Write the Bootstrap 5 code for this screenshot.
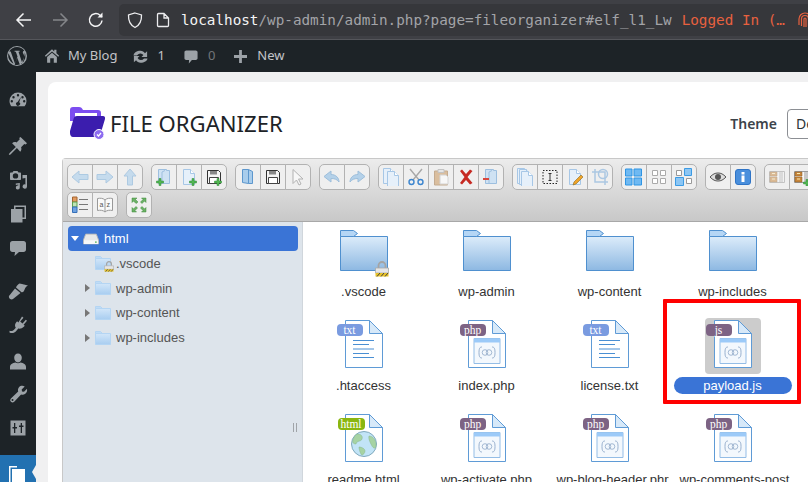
<!DOCTYPE html>
<html lang="en">

<head>
    <meta charset="UTF-8">
    <meta name="viewport" content="width=device-width, initial-scale=1.0">
    <title>File Organizer</title>
    <link href="https://cdn.jsdelivr.net/npm/bootstrap@5.3.0/dist/css/bootstrap.min.css" rel="stylesheet">
    <style>
        html, body { height: 100%; overflow: hidden; background: #f0f0f1; }
        body { font-family: "Noto Sans", sans-serif; width: 808px; height: 482px; }

        /* browser chrome */
        .ff-bar { height: 40px; background: #3f4045; border-bottom: 1px solid #55565b; padding-left: 15px; }
        .ff-nav { width: 36px; }
        .ff-url { margin-left: 14px; flex: 1; min-width: 0; height: 32px; background: #36373b; border-radius: 5px 0 0 5px; padding-left: 8px; font: 14.3px "DejaVu Sans Mono", monospace; color: #a3a4a8; white-space: nowrap; overflow: hidden; }
        .ff-url b { font-weight: 400; color: #f4f4f5; }
        .ff-shield { margin-right: 13px; }
        .ff-page { margin-right: 11px; }
        .ff-logged { color: #e8613f; margin-left: 10px; }
        .ff-print { margin-left: 12px; }

        /* wp admin */
        .wp-bar { height: 32px; background: #1d2327; color: #c3c4c7; font-size: 13px; padding-left: 7px; }
        .wp-bar svg { fill: #9ca2a7; display: block; flex: none; }
        .bar-home { margin: 0 8px 0 1px; }
        .bar-sync { margin: 0 8px 0 15px; }
        .bar-comment { margin: 0 10px 0 19px; }
        .bar-new { margin: 0 10px 0 19px; }
        .wp-side { width: 36px; background: #1d2327; padding-top: 11px; }
        .side-row { height: 34px; }
        .side-row svg { width: 20px; height: 20px; fill: #9ca2a7; display: block; margin-left: -1px; }
        .side-gap { margin-top: 12px; }
        .side-gap-sm { margin-top: 9px; }
        .side-gap-xs { margin-top: 3px; }
        .side-up { margin-top: -2px; }
        .side-active { height: 30px; margin-top: 10px; background: #2271b1; position: relative; padding: 11px 0 0 9px; }
        .side-active::after { content: ""; position: absolute; right: 0; top: 10px; border: 7px solid transparent; border-right-color: #f0f0f1; border-left: 0; border-right-width: 4px; }
        .wp-main { background: #f0f0f1; padding: 10px 0 0 12px; min-width: 0; overflow: hidden; }
        .fo-card { background: #fff; border-radius: 8px 0 0 0; height: 420px; overflow: hidden; padding: 25px 0 0 14px; width: 859px; }
        .fo-logo { margin-left: 8px; }
        .fo-title { font-size: 22.1px; color: #1d2327; font-weight: 400; margin: -2px 0 0 4px; line-height: 32px; }
        .fo-theme { font-size: 14px; font-weight: 600; color: #3c434a; margin-right: 10px; }
        .fo-select { width: 120px; height: 30px; min-height: 30px; font-size: 14px; padding: 0 24px 0 8px; border-color: #8c8f94; border-radius: 4px; color: #2c3338; flex: none; }

        /* elfinder */
        .elf-wrap { margin-top: 18px; border: 1px solid #c8c8c8; border-right: 0; border-radius: 4px 0 0 0; }
        .elf-tools { height: 63px; padding: 5px 0 0 4px; background: linear-gradient(#ececec, #c8c8c8); border-bottom: 1px solid #a8a8a8; }
        .elf-line { gap: 8px; height: 28px; flex-wrap: nowrap; }
        .elf-btn { width: 26px; height: 26px; padding: 0; background: #efefef; border: 1px solid #b2b2b2; border-radius: 5px; display: flex; align-items: center; justify-content: center; flex: none; }
        .elf-btn svg { width: 18px; height: 18px; display: block; flex: none; }
        .elf-btn.off svg { opacity: .5; }
        .elf-tree { width: 240px; height: 262px; background: #dde4eb; padding: 4px 4px 0 5px; font: 13px "Liberation Sans", sans-serif; color: #555; flex: none; position: relative; border-right: 1px solid #d0d6dc; }
        .tree-row { height: 24.75px; padding-left: 27px; }
        .tree-row svg { flex: none; }
        .tree-row.on { height: 25px; background: #3a74d6; color: #fff; border-radius: 4px; padding-left: 3px; }
        .tree-tri { width: 0; height: 0; border-style: solid; border-width: 4px 0 4px 5px; border-color: transparent transparent transparent #777; margin: 0 5px 0 -10px; flex: none; }
        .tree-tri.open { border-width: 5px 4px 0; border-color: #fff transparent transparent; margin: 0 4px 0 0; }
        .tree-ico { margin-right: 5px; flex: none; position: relative; display: flex; }
        .tree-grip { position: absolute; right: 5px; top: 201px; width: 4px; height: 9px; border: solid #a0a4a8; border-width: 0 1px; }
        .tree-lock { position: absolute; left: 9px; top: 5px; }
        .elf-files { display: grid; grid-template-columns: repeat(4, 123px); grid-auto-rows: 94.5px; margin-left: -1px; padding-top: 1px; font: 13px "Liberation Sans", sans-serif; color: #333; position: relative; }
        .file-cell { display: flex; flex-direction: column; align-items: center; }
        .file-box { width: 56px; height: 56px; border-radius: 4px; position: relative; display: flex; align-items: center; justify-content: center; }
        .file-box.doc { align-items: flex-start; padding-top: 2px; }
        .file-cell.sel .file-box { background: #ccc; }
        .file-name { margin-top: 3px; height: 17px; line-height: 17px; padding: 0 6px; border-radius: 9px; width: 118px; text-align: center; white-space: nowrap; overflow: hidden; }
        .file-box:not(.doc) + .file-name { margin-top: 4px; }
        .file-cell.sel .file-name { background: #3a74d6; color: #fff; }
        .file-tag { position: absolute; left: 1px; top: 6px; height: 12px; width: 26px; border-radius: 4px; color: #fff; font: 11.5px/12px "Liberation Serif", serif; text-align: center; }
        .tag-txt { background: #7a9be0; }
        .tag-php { background: #7d6384; }
        .tag-html { background: #8ab60f; left: 2px; width: 27px; }
        .big-lock { position: absolute; left: 39px; top: 38px; }
        .red-box { position: absolute; left: 361px; top: 77px; width: 138px; height: 105px; border: 4px solid #f00; border-radius: 1px; pointer-events: none; }
    </style>
</head>

<body>
    <svg width="0" height="0" class="position-absolute">
        <defs>
            <linearGradient id="fold" x1="0" y1="0" x2="0" y2="1"><stop offset="0" stop-color="#dcecfa"/><stop offset="1" stop-color="#8db8e2"/></linearGradient>
            <linearGradient id="fold2" x1="0" y1="0" x2="0" y2="1"><stop offset="0" stop-color="#d2e6f9"/><stop offset="1" stop-color="#a8cdf0"/></linearGradient>
            <symbol id="big-folder" viewBox="0 0 48 42">
                <path d="M.5 6.500h47v34H.5z" fill="url(#fold)" stroke="#4f90cf"/>
                <path d="M.5.500h13l4 3-4 3H.5z" fill="#b5d6f5" stroke="#4f90cf"/>
            </symbol>
            <symbol id="big-text" viewBox="0 0 38 48">
                <path d="M.5.500h24l13 13v34H.5z" fill="#fff" stroke="#5f9bd6"/>
                <path d="M24.500.500l13 13h-13z" fill="#d7e9f9" stroke="#5f9bd6"/>
                <path d="M8 20.500h21M8 24.500h16M8 29h21M8 33.500h16M8 37.500h21" stroke="#4a8fd3" fill="none"/>
            </symbol>
            <symbol id="big-code" viewBox="0 0 38 48">
                <path d="M.5.500h24l13 13v34H.5z" fill="#fff" stroke="#5f9bd6"/>
                <path d="M24.500.500l13 13h-13z" fill="#d7e9f9" stroke="#5f9bd6"/>
                <path d="M6 18.500h26v25H6z" fill="#f3f8fd" stroke="#94bde6"/>
                <path d="M6 18.500h26v4H6z" fill="#9ccaf8"/>
                <path d="M14 27c-2 0-3 1-3 5.500s1 5.500 3 5.500M24 27c2 0 3 1 3 5.500s-1 5.500-3 5.500" fill="none" stroke="#8fa8c8" stroke-width=".9"/>
                <circle cx="17" cy="32.500" r="2.800" fill="none" stroke="#8fa8c8" stroke-width=".8"/>
                <circle cx="21" cy="32.500" r="2.800" fill="none" stroke="#8fa8c8" stroke-width=".8"/>
            </symbol>
            <symbol id="big-web" viewBox="0 0 38 48">
                <path d="M.5.500h24l13 13v34H.5z" fill="#fff" stroke="#5f9bd6"/>
                <path d="M24.500.500l13 13h-13z" fill="#d7e9f9" stroke="#5f9bd6"/>
                <circle cx="19" cy="30" r="12.500" fill="#c2e4f7" stroke="#7fa9bd"/>
                <path d="M12 20c4 0 6 2 5 5s-5 1-6 5c-2 0-4-1-3-4s2-5 4-6zM24 22c4 0 7 4 7 9s-3 3-4 1-4-7-3-10zM14 33c3 0 6 2 6 4s-2 4-3 4-3-5-3-8z" fill="#a6d3a3" stroke="#86b58a" stroke-width=".5"/>
            </symbol>
            <symbol id="lock" viewBox="0 0 14 16">
                <path d="M3.500 7V4.500a3.500 3.500 0 0 1 7 0V7" fill="none" stroke="#a4a4a4" stroke-width="1.800"/>
                <path d="M.5 7h13v5H.5z" fill="#e6e6e6" stroke="#a8a8a8" stroke-width=".8"/>
                <path d="M.5 12h13v3.500H.5z" fill="#e8c227"/>
                <path d="M2 15.500l3-3.500M6 15.500l3-3.500M10 15.500l3-3.500" stroke="#444" stroke-width="1"/>
            </symbol>
            <symbol id="mini-folder" viewBox="0 0 16 14">
                <path d="M.5 2.500h15v11H.5z" fill="url(#fold2)" stroke="#b4d5f3"/>
                <path d="M.5.500h5l2 2h-7z" fill="#c0dcf6" stroke="#b4d5f3"/>
            </symbol>
            <symbol id="t-folder" viewBox="0 0 18 18">
                <path d="M3.500 1.500h8v1h3v13h-11z" fill="#cfe2f3" stroke="#9dbfdf"/>
                <path d="M10 2.500l-3 1.500v12" fill="none" stroke="#9dbfdf"/>
            </symbol>
            <symbol id="t-folder-open" viewBox="0 0 18 18">
                <path d="M3.500 1.500h6l4 2v12h-4l-6-1z" fill="#a9cdec" stroke="#5d97cd"/>
                <path d="M9.500 1.500v14" stroke="#5d97cd"/>
            </symbol>
            <symbol id="t-plus" viewBox="0 0 18 18">
                <path d="M5.500 10h2.500V7.500h2V10h2.500v2H10v2.500H8V12H5.500z" fill="#53b653" stroke="#2d8a36" stroke-width=".5"/>
            </symbol>
            <symbol id="t-file" viewBox="0 0 18 18">
                <path d="M3.500 1.500h7l4 4v11h-11z" fill="#e6f0fa" stroke="#a7c7e6"/>
                <path d="M10.500 1.500v4h4" fill="#fff" stroke="#a7c7e6"/>
            </symbol>
            <symbol id="t-floppy" viewBox="0 0 18 18">
                <path d="M2.500 2.500h11l2 2v11h-13z" fill="#f4f4f4" stroke="#333"/>
                <path d="M5 3h7v3.500H5z" fill="#888"/>
                <path d="M4.500 9.500h9v6h-9z" fill="#fff" stroke="#444"/>
            </symbol>
            <symbol id="t-grid-big" viewBox="0 0 18 18">
                <path d="M.5 1h6.500v7H.5zM9 1h7.500v7H9zM.5 10h6.500v7H.5zM9 10h7.500v7H9z" fill="#6fb9f2" stroke="#2f95e4"/>
            </symbol>
            <symbol id="t-grid-small" viewBox="0 0 18 18">
                <path d="M2.500 2.500h5v5h-5zM10.500 2.500h5v5h-5zM2.500 10.500h5v5h-5zM10.500 10.500h5v5h-5z" fill="#fff" stroke="#aaa"/>
            </symbol>
            <symbol id="t-grid-mix" viewBox="0 0 18 18">
                <path d="M1.500 2.500h5v5h-5zM11.500 10.500h5v5h-5z" fill="#fff" stroke="#999"/>
                <path d="M9.500.500h7v7h-7zM.500 9.500h8v8h-8z" fill="#8cc6f4" stroke="#3c9be4"/>
            </symbol>
            <symbol id="t-arch" viewBox="0 0 18 18">
                <path d="M1.500 3.500h15v11h-15z" fill="#f5f5f5" stroke="#999"/>
                <path d="M2 4h7v4H2zM2 9h7v5H2z" fill="#c8873c" stroke="#8a5a20" stroke-width=".5"/>
                <path d="M11 5h4M11 7h4M11 9h4M11 11h4M11 13h4" stroke="#9a9a9a"/>
                <path d="M4 5.500h3M4 11h3" stroke="#fbe9b0"/>
            </symbol>
            <symbol id="i-dash" viewBox="0 0 20 20"><path fill-rule="evenodd" d="M10 2.500a8.500 8.500 0 0 0-8.500 8.500c0 2 .7 3.900 1.900 5.300h13.200a8.300 8.300 0 0 0 1.900-5.300A8.500 8.500 0 0 0 10 2.500zM10 4a1.200 1.200 0 1 1 0 2.400A1.200 1.200 0 0 1 10 4zM5.500 6a1.200 1.200 0 1 1 0 2.400 1.200 1.200 0 0 1 0-2.400zM3.800 10a1.200 1.200 0 1 1 0 2.400 1.200 1.200 0 0 1 0-2.400zM13 7l-1.800 5.200a2 2 0 1 1-1.600-.3L13 7zM14.500 6a1.200 1.200 0 1 1 0 2.400 1.200 1.200 0 0 1 0-2.400zM16.200 10a1.200 1.200 0 1 1 0 2.400 1.200 1.200 0 0 1 0-2.400z"/></symbol>
            <symbol id="i-pin" viewBox="0 0 20 20"><path d="M12.500 1l6.500 6.300-1.400 1.300-1.300-.6-3.200 3.300c.6 1.600.4 3.200-.9 4.400L8.900 12 2.500 18.500.8 19l.6-1.700L7.800 11 4.100 7.300c1.200-1.300 2.800-1.500 4.400-.9l3.300-3.200-.6-1.300z"/></symbol>
            <symbol id="i-media" viewBox="0 0 20 20"><path fill-rule="evenodd" d="M3 2.500h1.500L5.500 1h4l1 1.500H12c.6 0 1 .4 1 1v5.500c0 .6-.4 1-1 1H3c-.6 0-1-.4-1-1V3.500c0-.6.4-1 1-1zM7.500 3.200a2.700 2.700 0 1 0 0 5.400 2.700 2.700 0 0 0 0-5.400z"/><path d="M14.500 5h4.500v11.500a2.200 2.200 0 1 1-1.600-2.100V8l-2.900.4zM7.800 13.500l4-.6v4.600a2 2 0 1 1-1.500-1.900v-1l-2.500.3z"/></symbol>
            <symbol id="i-pages" viewBox="0 0 20 20"><path fill-rule="evenodd" d="M6 1.500h12v13.500h-3.500v3.500H3V5h3zM7.500 3v2h7v8.500H16.500V3z"/></symbol>
            <symbol id="i-comment" viewBox="0 0 20 20"><path d="M4.500 3h11C17 3 18 4 18 5.500v6c0 1.500-1 2.500-2.500 2.500H11l-4.500 4 .5-4H4.500C3 14 2 13 2 11.500v-6C2 4 3 3 4.500 3z"/></symbol>
            <symbol id="i-brush" viewBox="0 0 20 20"><path d="M11.500 2.500L14 3l6 1.500c-2 1-2.800 2.300-3.300 3.700-.6 1.500-1 3.300-3.200 3L8 6.500c.5-2 2-3 3.500-4zM7 7.500l5.500 4.500-7.500 6c-1.200 1-3.500.2-4-1.500-.3-1 0-1.800 1-2.700z"/></symbol>
            <symbol id="i-plug" viewBox="0 0 20 20"><path d="M14 1.500l1.500 1.200-3.300 3.800 2.300 2 3.300-3.800L19 5.800l-3.400 3.900 1.200 1.100-1 1c-1.500 1.500-3.500 2.200-5.500 1.800l-2.300 2.600C6.500 18 4 18.500 1.500 17.500v-1.800c1.800.5 3.400.3 4.500-1l1.800-2c-1.200-1.700-1-3.800.3-5.300l1-1.100 1.300 1.100z"/></symbol>
            <symbol id="i-user" viewBox="0 0 20 20"><path d="M10 1.500c2.300 0 3.800 1.800 3.800 4.300S12.300 10.500 10 10.500 6.200 8.300 6.200 5.800 7.700 1.500 10 1.500zM7.500 10.500c1.500 1 3.500 1 5 0 3 .3 5.500 2 5.500 4.500v2.500H2V15c0-2.500 2.500-4.200 5.500-4.500z"/></symbol>
            <symbol id="i-wrench" viewBox="0 0 20 20"><path fill-rule="evenodd" d="M16.700 2.500l-3 3 .3 2 2 .3 3-3c.4 2-.2 4-1.700 5-1.300 1-2.800 1.200-4.200.7L6.200 17.700a2.300 2.300 0 1 1-3.300-3.300l7.300-7c-.5-1.500-.2-3 .8-4.200 1.300-1.400 3.700-1.900 5.700-.7zM4.500 15a1 1 0 1 0 0 2 1 1 0 0 0 0-2z"/></symbol>
            <symbol id="i-sliders" viewBox="0 0 20 20"><path fill-rule="evenodd" d="M2.500 2.500h15v15h-15zM6 5v4H4.500v1.500H6V15h1.300v-4.500H9V9H7.300V5zM12.700 5v2.500H11V9h1.700v6H14V9h1.500V7.500H14V5z"/></symbol>
        </defs>
    </svg>

    <div class="ff-bar d-flex align-items-center">
        <div class="ff-nav">
            <svg width="18" height="18" viewBox="0 0 18 18" fill="none" stroke="#f4f4f5" stroke-width="1.500" class="d-block"><path d="M16 9H2M8.500 2.500L2 9l6.500 6.500"/></svg>
        </div>
        <div class="ff-nav">
            <svg width="18" height="18" viewBox="0 0 18 18" fill="none" stroke="#85868a" stroke-width="1.500" class="d-block"><path d="M2 9h14M9.500 2.500L16 9l-6.500 6.500"/></svg>
        </div>
        <div>
            <svg width="18" height="18" viewBox="0 0 18 18" fill="none" stroke="#f4f4f5" stroke-width="1.500" class="d-block"><path d="M15 9.500a6.300 6.300 0 1 1-2-5.200L15 6"/><path d="M15.500 1.500v5h-5z" fill="#f4f4f5" stroke="none"/></svg>
        </div>
        <div class="ff-url d-flex align-items-center">
            <svg width="16" height="18" viewBox="0 0 16 18" fill="none" stroke="#ececee" stroke-width="1.300" class="flex-shrink-0 ff-shield"><path d="M8 2l6.500 2c.3 6-1.500 10-6.500 12.500C3 14 1.200 10 1.500 4z"/></svg>
            <svg width="14" height="16" viewBox="0 0 14 16" fill="none" stroke="#ececee" stroke-width="1.300" class="flex-shrink-0 ff-page"><path d="M1.500 2.500c0-.6.4-1 1-1h5.500l4.500 4.500v7.500c0 .6-.4 1-1 1h-9c-.6 0-1-.4-1-1zM8 1.500V6h4.500"/></svg>
            <span class="flex-shrink-0"><b>localhost</b>/wp-admin/admin.php?page=fileorganizer#elf_l1_Lw</span>
            <span class="ff-logged flex-shrink-0">Logged In (…</span>
            <svg width="16" height="18" viewBox="0 0 16 18" fill="none" stroke="#e8613f" stroke-width="1.200" class="ff-print flex-shrink-0"><path d="M2 14V8a6 6 0 0 1 12 0v6M4.500 15V8a3.500 3.500 0 0 1 7 0v7M7 16V8a1 1 0 0 1 2 0v8"/></svg>
        </div>
    </div>

    <div class="wp-bar d-flex align-items-center">
        <svg width="20" height="20" viewBox="0 0 20 20" class="me-3"><path fill-rule="evenodd" d="M10 0a10 10 0 1 1 0 20 10 10 0 0 1 0-20zM10 1a9 9 0 0 0-7.800 4.500h1.500L8 17.800l2.500-7.300-1.700-4.700-1.200-.1v-.9c2-.1 3.500-.1 5 0v.9l-1.100.1 3.800 11.500 1.300-4c1-3 .4-4.300-.4-5.700-.7-1.200-.4-2.700 1.100-2.900A9 9 0 0 0 10 1zM1.500 7.200a9 9 0 0 0 5 10.500zM10.200 11.800L7.700 18.700a9 9 0 0 0 5.100-.1zM17.600 6.300c.5 2.500-.5 4.500-1 6.200l-2.600 5.400a9 9 0 0 0 3.600-11.600z"/></svg>
        <svg width="16" height="16" viewBox="0 0 18 18" class="bar-home"><path d="M9 1.500l2.500 2.300V2h2.500v4l3 2.800-1 1L9 3.800 2 9.800l-1-1zM3.500 10L9 5.300l5.500 4.700v6.500h-3.500v-5H7v5H3.500z"/></svg>
        <span>My Blog</span>
        <svg width="17" height="17" viewBox="0 0 18 18" class="bar-sync"><path d="M9 3c2 0 3.700 1 4.700 2.500L16 3.500v6h-6l2.100-2.200A4 4 0 0 0 5.300 8H1.600C2 5.200 5 3 9 3zM2 8.500h6l-2.100 2.200a4 4 0 0 0 6.800.3h3.700C16 13.800 13 15.500 9 15.500c-2 0-3.700-1-4.700-2.500L2 15z"/></svg>
        <span>1</span>
        <svg width="14" height="17" viewBox="0 0 16 18" class="bar-comment"><path d="M2.500 2h11c1 0 2 1 2 2v7c0 1-1 2-2 2H9l-3.500 4 .3-4H2.500c-1 0-2-1-2-2V4c0-1 1-2 2-2z"/></svg>
        <span class="opacity-50">0</span>
        <svg width="13" height="13" viewBox="0 0 14 14" class="bar-new"><path d="M5.500 0h3v5.500H14v3H8.500V14h-3V8.500H0v-3h5.500z"/></svg>
        <span>New</span>
    </div>

    <div class="d-flex">
        <div class="wp-side flex-shrink-0">
            <div class="side-row d-flex align-items-center justify-content-center"><svg><use href="#i-dash"/></svg></div>
            <div class="side-row side-gap d-flex align-items-center justify-content-center"><svg><use href="#i-pin"/></svg></div>
            <div class="side-row d-flex align-items-center justify-content-center"><svg><use href="#i-media"/></svg></div>
            <div class="side-row d-flex align-items-center justify-content-center"><svg><use href="#i-pages"/></svg></div>
            <div class="side-row d-flex align-items-center justify-content-center"><svg><use href="#i-comment"/></svg></div>
            <div class="side-row side-gap-sm d-flex align-items-center justify-content-center"><svg><use href="#i-brush"/></svg></div>
            <div class="side-row d-flex align-items-center justify-content-center"><svg><use href="#i-plug"/></svg></div>
            <div class="side-row side-gap-xs d-flex align-items-center justify-content-center"><svg><use href="#i-user"/></svg></div>
            <div class="side-row side-up d-flex align-items-center justify-content-center"><svg><use href="#i-wrench"/></svg></div>
            <div class="side-row d-flex align-items-center justify-content-center"><svg><use href="#i-sliders"/></svg></div>
            <div class="side-active">
                <svg width="16" height="16" viewBox="0 0 16 16" class="d-block"><path d="M0 0h8v1.500H1.500V16H0z" fill="#fff"/><path d="M3 3h13v13H3z" fill="#fff"/></svg>
            </div>
        </div>

        <div class="wp-main flex-grow-1">
            <div class="fo-card">
                <div class="d-flex align-items-center">
                    <svg width="36" height="33" viewBox="0 0 36 33" class="flex-shrink-0 fo-logo">
                        <path d="M0 3c0-2 1-3 3-3h6c2 0 3 1 4 3h15c2 0 3 1 3 3v8H0z" fill="#7c4df0"/>
                        <path d="M5 6h22v5H5z" fill="#fff"/>
                        <path d="M0 26c0 2 1 4 3 4h24c2 0 3-1 3.500-3L35 12c.4-2-.5-3-2-3H7c-2 0-3 1-3.500 3L0 24z" fill="#3b1dae"/>
                        <circle cx="29" cy="27.500" r="5" fill="#8d6cf0" stroke="#fff"/>
                        <path d="M27 27.500l1.500 1.500L31 26" fill="none" stroke="#fff" stroke-width="1.200"/>
                    </svg>
                    <h1 class="fo-title flex-shrink-0">FILE ORGANIZER</h1>
                    <div class="ms-auto d-flex align-items-center">
                        <label class="fo-theme">Theme</label>
                        <select class="form-select fo-select"><option>Default</option></select>
                    </div>
                </div>

                <div class="elf-wrap">
                    <div class="elf-tools">
                        <div class="elf-line d-flex">
                            <div class="btn-group">
                                <button class="btn elf-btn off"><svg viewBox="0 0 18 18"><path d="M1 9l7-6v3.500h9v5H8V15z" fill="#9cc8ec" stroke="#6ea6d6"/></svg></button>
                                <button class="btn elf-btn off"><svg viewBox="0 0 18 18"><path d="M17 9l-7-6v3.500H1v5h9V15z" fill="#9cc8ec" stroke="#6ea6d6"/></svg></button>
                                <button class="btn elf-btn off"><svg viewBox="0 0 18 18"><path d="M9 1l6 7h-3.500v9h-5V8H3z" fill="#9cc8ec" stroke="#6ea6d6"/></svg></button>
                            </div>
                            <div class="btn-group">
                                <button class="btn elf-btn"><svg viewBox="0 0 18 18"><use href="#t-folder"/><use href="#t-plus" x="-4" y="3"/></svg></button>
                                <button class="btn elf-btn"><svg viewBox="0 0 18 18"><use href="#t-file"/><use href="#t-plus" x="4" y="3"/></svg></button>
                                <button class="btn elf-btn"><svg viewBox="0 0 18 18"><use href="#t-floppy"/><use href="#t-plus" x="4" y="3"/></svg></button>
                            </div>
                            <div class="btn-group">
                                <button class="btn elf-btn"><svg viewBox="0 0 18 18"><use href="#t-folder-open"/></svg></button>
                                <button class="btn elf-btn"><svg viewBox="0 0 18 18"><use href="#t-floppy"/></svg></button>
                                <button class="btn elf-btn off"><svg viewBox="0 0 18 18"><path d="M4 1.500v14l3.500-3.500 2.500 5 2-1-2.500-5H14z" fill="#fff" stroke="#777"/></svg></button>
                            </div>
                            <div class="btn-group">
                                <button class="btn elf-btn off"><svg viewBox="0 0 18 18"><path d="M8 3L1 8.500 8 14v-3.500c3 0 6 .5 8 3.500 0-4-3-7.500-8-7.500z" fill="#7ab4e4" stroke="#4f8fc8"/></svg></button>
                                <button class="btn elf-btn off"><svg viewBox="0 0 18 18"><path d="M10 3l7 5.500-7 5.500v-3.500c-3 0-6 .5-8 3.500 0-4 3-7.500 8-7.500z" fill="#7ab4e4" stroke="#4f8fc8"/></svg></button>
                            </div>
                            <div class="btn-group">
                                <button class="btn elf-btn"><svg viewBox="0 0 18 18"><use href="#t-file" x="-2" y="-1"/><use href="#t-file" x="2" y="2"/></svg></button>
                                <button class="btn elf-btn"><svg viewBox="0 0 18 18" fill="none"><path d="M3 1l9 11M15 1L6 12" stroke="#a8a8a8" stroke-width="1.400"/><circle cx="4.500" cy="14" r="2.500" stroke="#3d86cf" stroke-width="1.400"/><circle cx="13.500" cy="14" r="2.500" stroke="#3d86cf" stroke-width="1.400"/></svg></button>
                                <button class="btn elf-btn off"><svg viewBox="0 0 18 18"><path d="M2.500 3h13v14h-13z" fill="#c78f50" stroke="#9b6a34"/><path d="M6 1.500h6v3H6z" fill="#ddd" stroke="#999"/><path d="M8 7h6l2 2v7H8z" fill="#fff" stroke="#bbb"/></svg></button>
                                <button class="btn elf-btn"><svg viewBox="0 0 18 18"><path d="M3 3l2-1.500 4 4.500 4-4.500 2.500 1.500-5 6 5 6-2.500 1.500-4-4.500-4 4.500-2-1.500 4.500-6z" fill="#c62a23"/></svg></button>
                                <button class="btn elf-btn"><svg viewBox="0 0 18 18"><use href="#t-folder"/><path d="M1 10h6v2H1z" fill="#d9473d"/></svg></button>
                            </div>
                            <div class="btn-group">
                                <button class="btn elf-btn"><svg viewBox="0 0 18 18"><use href="#t-file" x="-2" y="-1"/><use href="#t-file" x="0" y="0"/><use href="#t-file" x="2" y="2"/></svg></button>
                                <button class="btn elf-btn"><svg viewBox="0 0 18 18" fill="none"><path d="M2 2.500h14v13H2z" stroke="#222" stroke-dasharray="1.500 1.500"/><path d="M7.500 5.500h3M7.500 12.500h3M9 5.500v7" stroke="#333"/></svg></button>
                                <button class="btn elf-btn"><svg viewBox="0 0 18 18"><use href="#t-file"/><path d="M7 17l1-3 7-7 2 2-7 7z" fill="#f0a428" stroke="#8a6a22" stroke-width=".6"/></svg></button>
                                <button class="btn elf-btn off"><svg viewBox="0 0 18 18" fill="none" stroke="#6aa2d8" stroke-width="1.500"><path d="M4 1v13h13M1 4h13v13"/><circle cx="12" cy="6" r="4.500"/></svg></button>
                            </div>
                            <div class="btn-group">
                                <button class="btn elf-btn"><svg viewBox="0 0 18 18"><use href="#t-grid-big"/></svg></button>
                                <button class="btn elf-btn"><svg viewBox="0 0 18 18"><use href="#t-grid-small"/></svg></button>
                                <button class="btn elf-btn"><svg viewBox="0 0 18 18"><use href="#t-grid-mix"/></svg></button>
                            </div>
                            <div class="btn-group">
                                <button class="btn elf-btn"><svg viewBox="0 0 18 18"><path d="M1 9c3-3 5-4 8-4s5 1 8 4c-3 3-5 4-8 4s-5-1-8-4z" fill="#ddd" stroke="#555"/><circle cx="9" cy="9" r="3" fill="#555"/></svg></button>
                                <button class="btn elf-btn"><svg viewBox="0 0 18 18"><rect x="1.500" y="1.500" width="15" height="15" rx="2.500" fill="#4a8fdc" stroke="#2f74c6"/><path d="M7.500 4h3v2.500h-3zM7.500 7.500h3V14h-3z" fill="#fff"/></svg></button>
                            </div>
                            <div class="btn-group">
                                <button class="btn elf-btn off"><svg viewBox="0 0 18 18"><use href="#t-arch"/></svg></button>
                                <button class="btn elf-btn"><svg viewBox="0 0 18 18"><use href="#t-arch"/><use href="#t-plus" x="5" y="4"/></svg></button>
                            </div>
                        </div>
                        <div class="elf-line d-flex">
                            <div class="btn-group">
                                <button class="btn elf-btn"><svg viewBox="0 0 18 18"><path d="M1.500 1h4.500v5H1.500z" fill="#e09a60" stroke="#a5642e"/><path d="M1.500 6h4.500v5H1.500z" fill="#bfe3b5" stroke="#5ea04e"/><path d="M1.500 11h4.500v5.500H1.500z" fill="#6ea2e0" stroke="#356fb8"/><path d="M8 3.500h9M8 8.500h9M8 13.500h9" stroke="#777"/></svg></button>
                                <button class="btn elf-btn"><svg viewBox="0 0 18 18" fill="none"><path d="M9 4c-2-2-5-2-7.500-1.500v12c2.500-.5 5.500-.5 7.500 1.500 2-2 5-2 7.500-1.500v-12C14 2 11 2 9 4zM9 4v12" fill="#fafafa" stroke="#999"/><text x="3.500" y="11" font-size="7" font-family="Liberation Sans" fill="#555">a</text><text x="10.500" y="11" font-size="7" font-family="Liberation Sans" fill="#555">z</text></svg></button>
                            </div>
                            <div class="btn-group">
                                <button class="btn elf-btn"><svg viewBox="0 0 18 18" fill="#6bb166" stroke="#3f8a3b" stroke-width=".5"><path d="M2 2h5L5.500 3.500 8 6 6 7.500 3.500 5 2 6.500zM16 2v4.500L14.500 5 12 7.500 10.500 6 13 3.500 11.500 2zM2 16v-4.500L3.500 13 6 10.500 7.500 12 5 14.500 6.500 16zM16 16h-4.500L13 14.500 10.500 12 12 10.500 14.500 13 16 11.500z"/></svg></button>
                            </div>
                        </div>
                    </div>

                    <div class="d-flex">
                        <div class="elf-tree">
                            <div class="tree-row on d-flex align-items-center">
                                <i class="tree-tri open"></i>
                                <svg width="16" height="12" viewBox="0 0 18 13" class="tree-ico"><path d="M3 1h12l2.500 6.500v4.500H.5V7.500z" fill="#e8e8e8" stroke="#b4b4b4"/><path d="M1 8h16v4H1z" fill="#f8f8f8"/><circle cx="14.500" cy="10" r="1" fill="#57b35a"/></svg>
                                <span>html</span>
                            </div>
                            <div class="tree-row d-flex align-items-center">
                                <span class="tree-ico"><svg width="16" height="14"><use href="#mini-folder"/></svg><svg width="10" height="11" class="tree-lock"><use href="#lock"/></svg></span>
                                <span>.vscode</span>
                            </div>
                            <div class="tree-row d-flex align-items-center"><i class="tree-tri"></i><svg width="16" height="14" class="tree-ico"><use href="#mini-folder"/></svg><span>wp-admin</span></div>
                            <div class="tree-row d-flex align-items-center"><i class="tree-tri"></i><svg width="16" height="14" class="tree-ico"><use href="#mini-folder"/></svg><span>wp-content</span></div>
                            <div class="tree-row d-flex align-items-center"><i class="tree-tri"></i><svg width="16" height="14" class="tree-ico"><use href="#mini-folder"/></svg><span>wp-includes</span></div>
                            <div class="tree-grip"></div>
                        </div>

                        <div class="elf-files">
                            <div class="file-cell">
                                <div class="file-box"><svg width="48" height="42"><use href="#big-folder"/></svg><svg width="14" height="16" class="big-lock"><use href="#lock"/></svg></div>
                                <div class="file-name">.vscode</div>
                            </div>
                            <div class="file-cell"><div class="file-box"><svg width="48" height="42"><use href="#big-folder"/></svg></div><div class="file-name">wp-admin</div></div>
                            <div class="file-cell"><div class="file-box"><svg width="48" height="42"><use href="#big-folder"/></svg></div><div class="file-name">wp-content</div></div>
                            <div class="file-cell"><div class="file-box"><svg width="48" height="42"><use href="#big-folder"/></svg></div><div class="file-name">wp-includes</div></div>

                            <div class="file-cell"><div class="file-box doc"><svg width="38" height="48"><use href="#big-text"/></svg><span class="file-tag tag-txt">txt</span></div><div class="file-name">.htaccess</div></div>
                            <div class="file-cell"><div class="file-box doc"><svg width="38" height="48"><use href="#big-code"/></svg><span class="file-tag tag-php">php</span></div><div class="file-name">index.php</div></div>
                            <div class="file-cell"><div class="file-box doc"><svg width="38" height="48"><use href="#big-text"/></svg><span class="file-tag tag-txt">txt</span></div><div class="file-name">license.txt</div></div>
                            <div class="file-cell sel"><div class="file-box doc"><svg width="38" height="48"><use href="#big-code"/></svg><span class="file-tag tag-php">js</span></div><div class="file-name">payload.js</div></div>

                            <div class="file-cell"><div class="file-box doc"><svg width="38" height="48"><use href="#big-web"/></svg><span class="file-tag tag-html">html</span></div><div class="file-name">readme.html</div></div>
                            <div class="file-cell"><div class="file-box doc"><svg width="38" height="48"><use href="#big-code"/></svg><span class="file-tag tag-php">php</span></div><div class="file-name">wp-activate.php</div></div>
                            <div class="file-cell"><div class="file-box doc"><svg width="38" height="48"><use href="#big-code"/></svg><span class="file-tag tag-php">php</span></div><div class="file-name">wp-blog-header.php</div></div>
                            <div class="file-cell"><div class="file-box doc"><svg width="38" height="48"><use href="#big-code"/></svg><span class="file-tag tag-php">php</span></div><div class="file-name">wp-comments-post</div></div>

                            <div class="red-box"></div>
                        </div>
                    </div>
                </div>
            </div>
        </div>
    </div>

    <script src="https://cdn.jsdelivr.net/npm/bootstrap@5.3.0/dist/js/bootstrap.bundle.min.js"></script>
</body>

</html>
